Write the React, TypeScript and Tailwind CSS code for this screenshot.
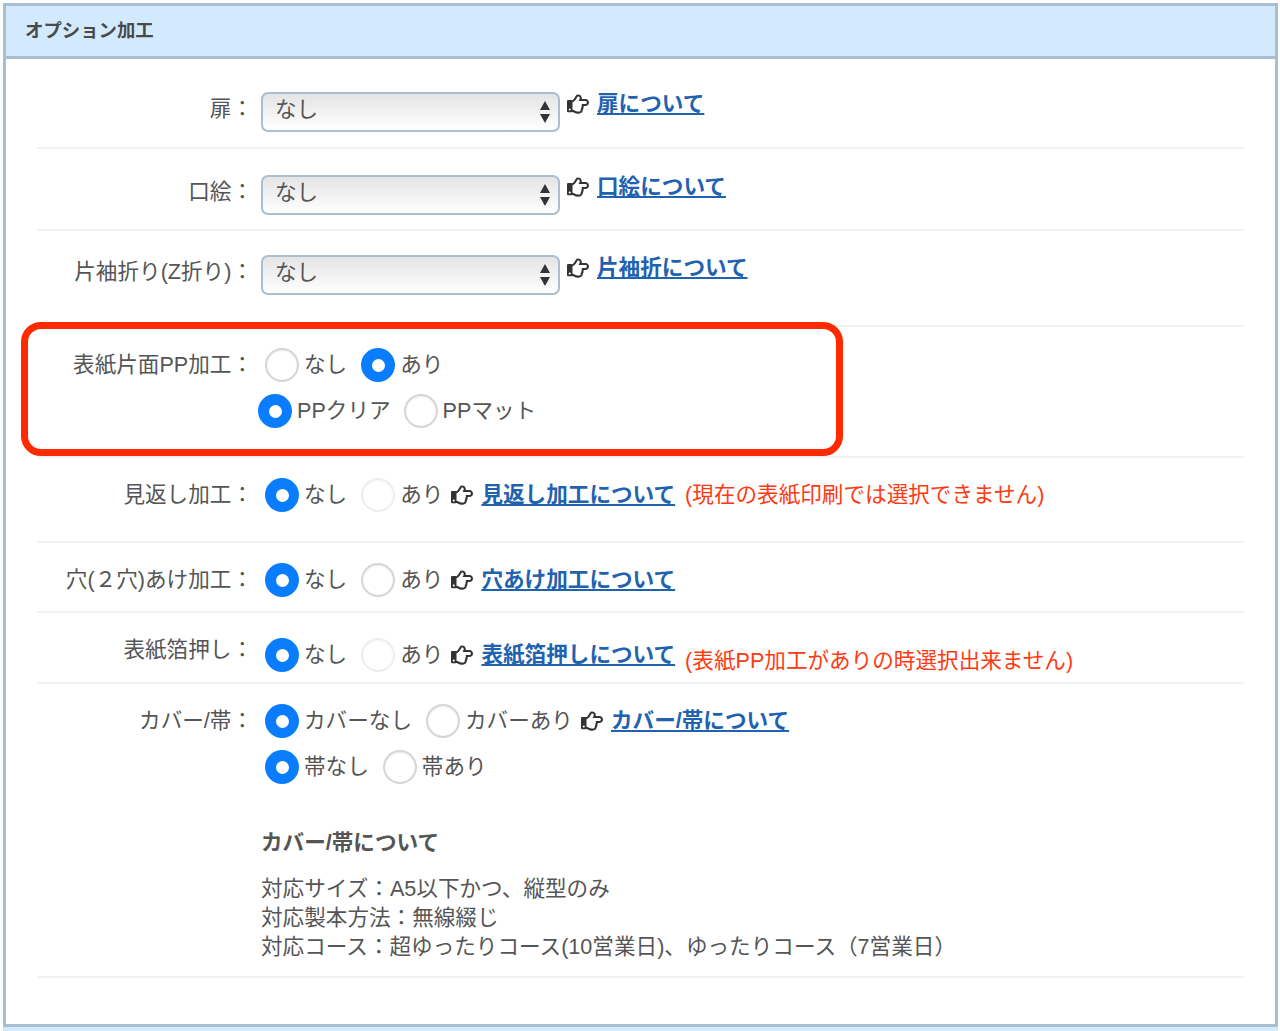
import type { ReactNode } from "react";
import { FaRegHandPointRight } from "react-icons/fa";

const Radio = ({ on, faint }: { on?: boolean; faint?: boolean }) =>
  on ? (
    <span className="flex h-[34px] w-[34px] shrink-0 items-center justify-center rounded-full bg-[#0a7dff]">
      <span className="h-[13px] w-[13px] rounded-full bg-white" />
    </span>
  ) : (
    <span
      className={
        faint
          ? "h-[34px] w-[34px] shrink-0 rounded-full border-2 border-[#eeeeee] bg-white shadow-[inset_0_1px_2px_rgba(0,0,0,0.04)]"
          : "h-[34px] w-[34px] shrink-0 rounded-full border-2 border-[#d6d6d6] bg-white shadow-[inset_0_1px_2px_rgba(0,0,0,0.08)]"
      }
    />
  );

const Opt = ({ on, faint, label, className }: { on?: boolean; faint?: boolean; label: string; className?: string }) => (
  <span className={`flex items-center ${className ?? ""}`}>
    <Radio on={on} faint={faint} />
    <span className="ml-[5px] whitespace-nowrap leading-[34px]">{label}</span>
  </span>
);

const Help = ({ label, className }: { label: string; className?: string }) => (
  <span className={`flex items-center ${className ?? ""}`}>
    <FaRegHandPointRight className="h-[22px] w-[22px] shrink-0 text-[#333333]" />
    <a className="ml-[8px] whitespace-nowrap font-bold text-[#1f62b0] underline underline-offset-2">{label}</a>
  </span>
);

const Select = () => (
  <div className="flex h-[40px] w-[299px] shrink-0 items-center justify-between rounded-[7px] border-2 border-[#a9bfd1] bg-gradient-to-b from-[#e4e4e4] to-white pl-[12px] pr-[7px]">
    <span className="relative -top-[2px]">なし</span>
    <svg width="12" height="24" viewBox="0 0 12 24" className="text-[#333333]">
      <path d="M6 1 L11 10 H1 Z M1 14 H11 L6 23 Z" fill="currentColor" />
    </svg>
  </div>
);

const Row = ({ label, className, children }: { label: string; className: string; children: ReactNode }) => (
  <div className={`flex items-start border-b-2 border-[#f2f2f2] ${className}`}>
    <div className="flex h-[34px] w-[216px] shrink-0 items-center justify-end whitespace-nowrap leading-[34px]">{label}</div>
    <div className="ml-[8px]">{children}</div>
  </div>
);

const Note = ({ text, className }: { text: string; className: string }) => (
  <span className={`whitespace-nowrap text-[#ff3a12] ${className}`}>{text}</span>
);

export default function App() {
  return (
    <div className="relative h-[1031px] w-[1280px] overflow-hidden bg-white pt-[3px] pl-[3px] pr-[2px] font-['Liberation_Sans','Noto_Sans_CJK_JP',sans-serif] text-[21.6px] text-[#555555]">
      <div className="flex h-[1024px] flex-col border-x-[3px] border-t-[3px] border-b-[3px] border-[#a9bfd1]">
        <div className="flex h-[53px] shrink-0 items-center border-b-[3px] border-[#a9bfd1] bg-[#d3e9fd] pl-[19px] text-[18.4px] font-bold text-[#4a4a4a]">
          オプション加工
        </div>
        <div className="px-[31px]">
          <Row label="扉：" className="h-[90px] pt-[33px]">
            <div className="flex items-start">
              <Select />
              <Help label="扉について" className="-mt-[3px] ml-[7px] h-[30px]" />
            </div>
          </Row>
          <Row label="口絵：" className="h-[82px] pt-[26px]">
            <div className="flex items-start">
              <Select />
              <Help label="口絵について" className="-mt-[3px] ml-[7px] h-[30px]" />
            </div>
          </Row>
          <Row label="片袖折り(Z折り)：" className="h-[96px] pt-[24px]">
            <div className="flex items-start">
              <Select />
              <Help label="片袖折について" className="-mt-[2px] ml-[7px] h-[30px]" />
            </div>
          </Row>
          <Row label="表紙片面PP加工：" className="h-[131px] pt-[21px]">
            <div className="flex flex-col gap-[12px]">
              <div className="ml-[4px] flex">
                <Opt label="なし" />
                <Opt on label="あり" className="ml-[14px]" />
              </div>
              <div className="-ml-[3px] flex">
                <Opt on label="PPクリア" />
                <Opt label="PPマット" className="ml-[13px]" />
              </div>
            </div>
          </Row>
          <Row label="見返し加工：" className="h-[85px] pt-[20px]">
            <div className="ml-[4px] flex items-center">
              <Opt on label="なし" />
              <Opt faint label="あり" className="ml-[14px]" />
              <Help label="見返し加工について" className="ml-[8px]" />
              <Note text="(現在の表紙印刷では選択できません)" className="ml-[10px]" />
            </div>
          </Row>
          <Row label="穴(２穴)あけ加工：" className="h-[70px] pt-[20px]">
            <div className="ml-[4px] flex items-center">
              <Opt on label="なし" />
              <Opt label="あり" className="ml-[14px]" />
              <Help label="穴あけ加工について" className="ml-[8px]" />
            </div>
          </Row>
          <Row label="表紙箔押し：" className="h-[71px] pt-[20px]">
            <div className="ml-[4px] flex items-center">
              <Opt on label="なし" />
              <Opt faint label="あり" className="ml-[14px]" />
              <Help label="表紙箔押しについて" className="ml-[8px]" />
              <Note text="(表紙PP加工がありの時選択出来ません)" className="ml-[10px] mt-[12px]" />
            </div>
          </Row>
          <Row label="カバー/帯：" className="h-[294px] pt-[20px]">
            <div className="ml-[4px] flex items-center">
              <Opt on label="カバーなし" />
              <Opt label="カバーあり" className="ml-[14px]" />
              <Help label="カバー/帯について" className="ml-[8px]" />
            </div>
            <div className="ml-[4px] mt-[12px] flex items-center">
              <Opt on label="帯なし" />
              <Opt label="帯あり" className="ml-[14px]" />
            </div>
            <p className="mt-[44px] font-bold leading-[30px]">カバー/帯について</p>
            <div className="mt-[16px] leading-[29px]">
              <p>対応サイズ：A5以下かつ、縦型のみ</p>
              <p>対応製本方法：無線綴じ</p>
              <p>対応コース：超ゆったりコース(10営業日)、ゆったりコース（7営業日）</p>
            </div>
          </Row>
        </div>
      </div>
      <div className="h-[4px] bg-[#d3e9fd]" />
      {/* red highlight drawn over the form */}
      <div className="absolute left-[21px] top-[322px] h-[134px] w-[822px] rounded-[20px] border-[7px] border-[#ff2a00]" />
    </div>
  );
}
